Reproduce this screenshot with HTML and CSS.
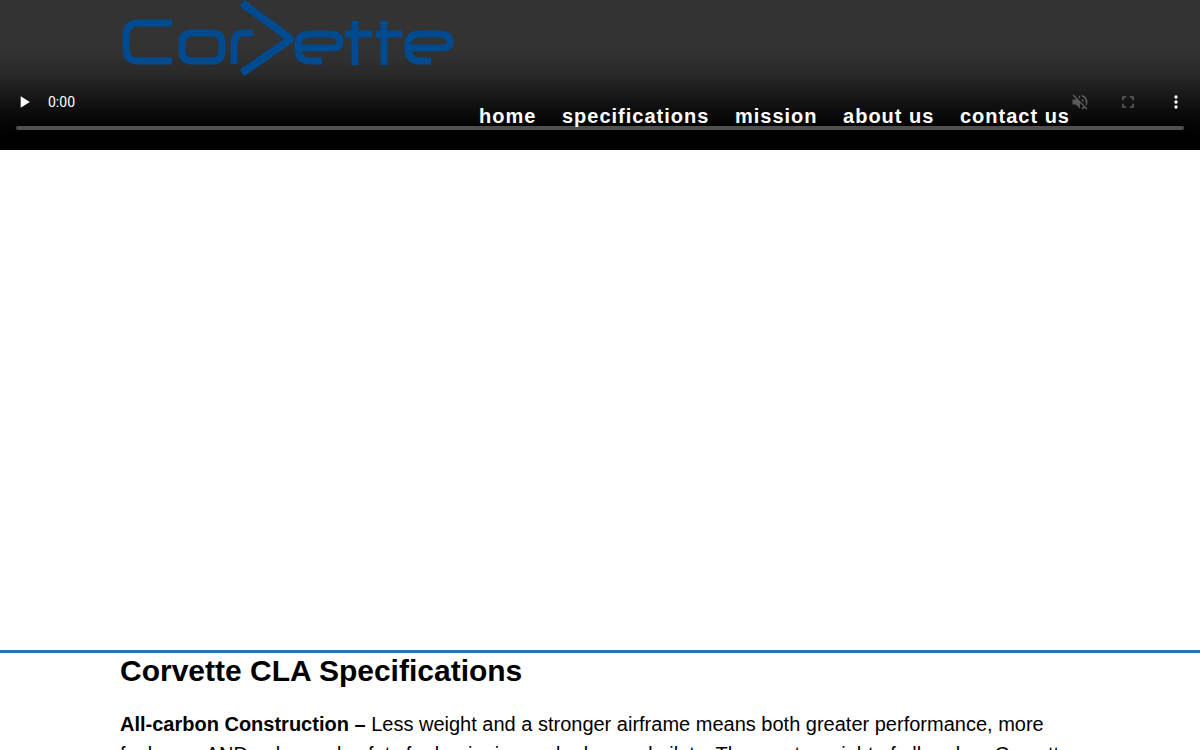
FILE: index.html
```html
<!DOCTYPE html>
<html lang="en">
<head>
  <meta charset="UTF-8" />
  <meta name="viewport" content="width=device-width, initial-scale=1.0" />
  <title>Corvette CLA</title>
  <link rel="stylesheet" href="styles.css">
</head>
<body>
  <!-- Header -->
  <header class="hero">
    <video class="hero-video" src="corvette.mp4" preload="none" controls muted></video>
    <div class="container header-row">
      <a href="#home" class="logo" aria-label="Corvette">
        <svg width="336" height="76" viewBox="0 0 336 76" fill="none" stroke="#004a8f" stroke-width="7">
          <path d="M52 23H19Q6 23 6 36V49Q6 61 19 61H52" />
          <path d="M74 33H92Q102 33 102 43V51Q102 61 92 61H72Q62 61 62 51V43Q62 33 72 33Z" />
          <path d="M114 64V44Q114 33 124 33H133" />
          <path d="M122 3L168 37Q171 39 168 41L122 73" stroke-width="8" />
          <path d="M202 61H191Q178 61 178 49V45Q178 34 190 34H209Q220 34 220 42Q220 48 213 48H180" />
          <path d="M235 21V65M225 34H252M264 21V65M256 34H282" />
          <path d="M311 61H300Q288 61 288 49V45Q288 34 300 34H319Q330 34 330 42Q330 48 323 48H290" />
        </svg>
      </a>
      <nav>
        <ul class="nav-list">
          <li><a href="#home">home</a></li>
          <li><a href="#specifications">specifications</a></li>
          <li><a href="#mission">mission</a></li>
          <li><a href="#about">about us</a></li>
          <li><a href="#contact">contact us</a></li>
        </ul>
      </nav>
    </div>
  </header>

  <!-- Specifications -->
  <section id="specifications" class="specs">
    <div class="container">
      <h1>Corvette CLA Specifications</h1>
      <p><strong>All-carbon Construction –</strong> Less weight and a stronger airframe means both greater performance, more fuel ease AND enhanced safety for beginning and advanced pilots. The empty weight of all-carbon Corvette is less than that of its rivals.</p>
    </div>
  </section>
</body>
</html>
```

FILE: styles.css
```css
* { margin: 0; padding: 0; box-sizing: border-box; }
body {
  font-family: "Liberation Sans", Arial, sans-serif;
  font-size: 20px;
  line-height: 30px;
  color: #000;
  background: #fff;
}
.container { width: 80%; margin: 0 auto; }
.hero { position: relative; height: 650px; }
.hero-video { display: block; width: 100%; height: 150px; }
.header-row {
  position: absolute;
  top: 0;
  left: 10%;
  display: flex;
  justify-content: space-between;
}
.logo svg { display: block; }
.nav-list { margin-top: 101px; list-style: none; }
.nav-list li { display: inline-block; padding: 0 10px; }
.nav-list a {
  color: #fff;
  font-weight: bold;
  letter-spacing: 1px;
  text-decoration: none;
}
.specs { border-top: 3px solid #2a72b5; }
.specs h1 { font-size: 30px; line-height: 36px; margin-bottom: 20px; }
```
